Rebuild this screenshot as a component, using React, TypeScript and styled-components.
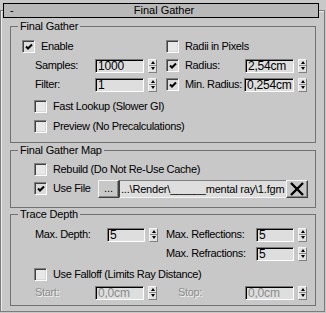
import React from "react";
import styled, { createGlobalStyle } from "styled-components";

const GlobalStyle = createGlobalStyle`
  html, body {
    margin: 0;
    padding: 0;
    background: #c8c8c8;
  }
  body {
    font-family: "Liberation Sans", Arial, sans-serif;
    font-size: 11px;
    color: #000;
  }
`;

const Rollout = styled.div`
  margin-top: 10px;
  width: 325px;
  height: 302px;
  box-sizing: border-box;
  border: 1px solid #7c7c7c;
  box-shadow: inset 1px 1px 0 #ececec;
  display: flex;
  flex-direction: column;
`;

const Header = styled.div`
  margin: -8px 5px 0 2px;
  height: 15px;
  box-sizing: border-box;
  border: 1px solid #000;
  background: #b9b9b9;
  display: flex;
  align-items: center;
  line-height: 13px;
  .minus {
    width: 20px;
    padding-left: 6px;
    box-sizing: border-box;
  }
  .title {
    flex: 1;
    text-align: center;
  }
  .spacer {
    width: 14px;
  }
`;

const Group = styled.fieldset<{ $top: number }>`
  margin: ${(p) => p.$top}px 0 0 9px;
  width: 306px;
  box-sizing: border-box;
  border: 1px solid #727272;
  padding: 0;
  min-width: 0;
`;

const Legend = styled.legend`
  margin-left: 7px;
  padding: 0 2px;
  line-height: 13px;
  font-size: 11px;
  letter-spacing: -0.2px;
`;

const Body = styled.div<{ $h: number; $pt: number }>`
  height: ${(p) => p.$h}px;
  box-sizing: border-box;
  padding: ${(p) => p.$pt}px 0 0 11px;
  display: flex;
  flex-direction: column;
`;

const Columns = styled.div`
  display: grid;
  grid-template-columns: 144px 1fr;
`;

const Col = styled.div`
  display: flex;
  flex-direction: column;
`;

const Row = styled.div<{ $h: number; $pl?: number }>`
  height: ${(p) => p.$h}px;
  padding-left: ${(p) => p.$pl ?? 0}px;
  display: flex;
  align-items: center;
  white-space: nowrap;
  line-height: 13px;
`;

const Label = styled.span<{ $w?: number; $ml?: number; $off?: boolean }>`
  width: ${(p) => (p.$w ? `${p.$w}px` : "auto")};
  margin-left: ${(p) => p.$ml ?? 0}px;
  flex: none;
  letter-spacing: -0.35px;
  color: ${(p) => (p.$off ? "#8c8c8c" : "#000")};
  text-shadow: ${(p) => (p.$off ? "1px 1px 0 #f4f4f4" : "none")};
`;

const CheckBox = styled.span<{ $on?: boolean }>`
  width: 13px;
  height: 13px;
  flex: none;
  box-sizing: border-box;
  border: 1px solid;
  border-color: #808080 #ffffff #ffffff #808080;
  box-shadow: inset 1px 1px 0 #404040, inset -1px -1px 0 #d8d8d8;
  background: ${(p) => (p.$on ? "#dcdcdc" : "#e8e8e8")};
  display: flex;
  align-items: center;
  justify-content: center;
  margin-right: 6px;
`;

const Field = styled.span<{ $w: number; $off?: boolean }>`
  width: ${(p) => p.$w}px;
  height: 14px;
  flex: none;
  box-sizing: border-box;
  border: 1px solid;
  border-color: #7a7a7a #ffffff #ffffff #7a7a7a;
  box-shadow: inset 1px 1px 0 #000;
  background: #dedede;
  color: ${(p) => (p.$off ? "#8a8a8a" : "#000")};
  padding-left: 2px;
  line-height: 12px;
  font-size: 12px;
  letter-spacing: -0.2px;
  overflow: hidden;
`;

const Arrows = styled.span`
  width: 9px;
  height: 14px;
  margin-left: 4px;
  flex: none;
  box-sizing: border-box;
  border: 1px solid;
  border-color: #f4f4f4 #808080 #808080 #f4f4f4;
  background: #e2e2e2;
  display: flex;
  flex-direction: column;
`;

const ArrowHalf = styled.span<{ $down?: boolean }>`
  flex: 1;
  display: flex;
  align-items: center;
  justify-content: center;
  border-top: ${(p) => (p.$down ? "1px solid #8a8a8a" : "none")};
  &::before {
    content: "";
    width: 0;
    height: 0;
    border-left: 2.5px solid transparent;
    border-right: 2.5px solid transparent;
    ${(p) => (p.$down ? "border-top: 3px solid #000;" : "border-bottom: 3px solid #000;")}
  }
`;

const Button = styled.span<{ $w: number }>`
  width: ${(p) => p.$w}px;
  height: 18px;
  flex: none;
  box-sizing: border-box;
  border: 1px solid;
  border-color: #f6f6f6 #404040 #404040 #f6f6f6;
  box-shadow: inset -1px -1px 0 #888;
  background: #c8c8c8;
  display: flex;
  align-items: center;
  justify-content: center;
  line-height: 13px;
`;

const PathField = styled.span`
  width: 167px;
  height: 18px;
  flex: none;
  box-sizing: border-box;
  border-top: 1px solid #808080;
  border-left: 1px solid #404040;
  border-bottom: 1px solid #f4f4f4;
  background: #dedede;
  padding-left: 1px;
  line-height: 16px;
  font-size: 11px;
  overflow: hidden;
  white-space: nowrap;
  letter-spacing: -0.2px;
`;

const Check = () => (
  <svg width="8" height="8" viewBox="0 0 8 8">
    <polyline points="1,3.5 3,5.5 7,1.5" fill="none" stroke="#000" strokeWidth="2" />
  </svg>
);

const Box = ({ on }: { on?: boolean }) => <CheckBox $on={on}>{on && <Check />}</CheckBox>;

const Spinner = ({ w, value, off }: { w: number; value: string; off?: boolean }) => (
  <>
    <Field $w={w} $off={off}>{value}</Field>
    <Arrows>
      <ArrowHalf />
      <ArrowHalf $down />
    </Arrows>
  </>
);

const App = () => {
  return (
    <>
      <GlobalStyle />
      <Rollout>
        <Header>
          <span className="minus">-</span>
          <span className="title">Final Gather</span>
          <span className="spacer" />
        </Header>

        <Group $top={2}>
          <Legend>Final Gather</Legend>
          <Body $h={109} $pt={4}>
            <Columns>
              <Col>
                <Row $h={19}>
                  <Box on />
                  <Label>Enable</Label>
                </Row>
                <Row $h={19}>
                  <Label $ml={13} $w={60}>Samples:</Label>
                  <Spinner w={49} value="1000" />
                </Row>
                <Row $h={19}>
                  <Label $ml={13} $w={60}>Filter:</Label>
                  <Spinner w={49} value="1" />
                </Row>
              </Col>
              <Col>
                <Row $h={19}>
                  <Box />
                  <Label>Radii in Pixels</Label>
                </Row>
                <Row $h={19}>
                  <Box on />
                  <Label $w={60}>Radius:</Label>
                  <Spinner w={49} value="2,54cm" />
                </Row>
                <Row $h={19}>
                  <Box on />
                  <Label $w={59}>Min. Radius:</Label>
                  <Spinner w={50} value="0,254cm" />
                </Row>
              </Col>
            </Columns>
            <Row $h={20} $pl={12} style={{ marginTop: 2 }}>
              <Box />
              <Label>Fast Lookup (Slower GI)</Label>
            </Row>
            <Row $h={20} $pl={12}>
              <Box />
              <Label>Preview (No Precalculations)</Label>
            </Row>
          </Body>
        </Group>

        <Group $top={1}>
          <Legend>Final Gather Map</Legend>
          <Body $h={50} $pt={3}>
            <Row $h={18} $pl={12}>
              <Box />
              <Label>Rebuild (Do Not Re-Use Cache)</Label>
            </Row>
            <Row $h={21} $pl={12}>
              <Box on />
              <Label $w={45}>Use File</Label>
              <Button $w={21}>...</Button>
              <PathField>...\Render\______mental ray\1.fgm</PathField>
              <Button $w={22}>
                <svg width="14" height="14" viewBox="0 0 14 14">
                  <path d="M1 1 L13 13 M13 1 L1 13" stroke="#000" strokeWidth="2.4" />
                </svg>
              </Button>
            </Row>
          </Body>
        </Group>

        <Group $top={0}>
          <Legend>Trace Depth</Legend>
          <Body $h={84} $pt={4}>
            <Columns>
              <Col>
                <Row $h={19}>
                  <Label $ml={13} $w={72}>Max. Depth:</Label>
                  <Spinner w={38} value="5" />
                </Row>
              </Col>
              <Col>
                <Row $h={19}>
                  <Label $w={90}>Max. Reflections:</Label>
                  <Spinner w={38} value="5" />
                </Row>
                <Row $h={19}>
                  <Label $w={90}>Max. Refractions:</Label>
                  <Spinner w={38} value="5" />
                </Row>
              </Col>
            </Columns>
            <Row $h={22} $pl={12}>
              <Box />
              <Label>Use Falloff (Limits Ray Distance)</Label>
            </Row>
            <Columns>
              <Col>
                <Row $h={15}>
                  <Label $ml={13} $w={60} $off>Start:</Label>
                  <Spinner w={49} value="0,0cm" off />
                </Row>
              </Col>
              <Col>
                <Row $h={15}>
                  <Label $ml={12} $w={67} $off>Stop:</Label>
                  <Spinner w={49} value="0,0cm" off />
                </Row>
              </Col>
            </Columns>
          </Body>
        </Group>
      </Rollout>
    </>
  );
};

export default App;
